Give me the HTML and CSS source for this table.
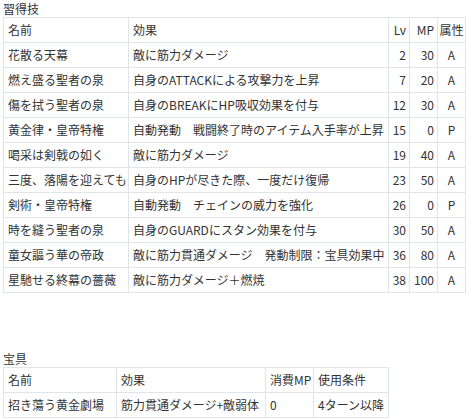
FILE: index.html
```html
<!DOCTYPE html>
<html lang="ja">
<head>
<meta charset="utf-8">
<link rel="stylesheet" href="styles.css">
</head>
<body>
<div class="page">
  <h3 class="caption">習得技</h3>
  <table class="grid skills">
    <colgroup>
      <col class="c-name"><col class="c-eff"><col class="c-lv"><col class="c-mp"><col class="c-attr">
    </colgroup>
    <tr><td>名前</td><td>効果</td><td class="num">Lv</td><td class="num">MP</td><td class="ctr">属性</td></tr>
    <tr><td>花散る天幕</td><td>敵に筋力ダメージ</td><td class="num">2</td><td class="num">30</td><td class="ctr">A</td></tr>
    <tr><td>燃え盛る聖者の泉</td><td>自身のATTACKによる攻撃力を上昇</td><td class="num">7</td><td class="num">20</td><td class="ctr">A</td></tr>
    <tr><td>傷を拭う聖者の泉</td><td>自身のBREAKにHP吸収効果を付与</td><td class="num">12</td><td class="num">30</td><td class="ctr">A</td></tr>
    <tr><td>黄金律・皇帝特権</td><td>自動発動　戦闘終了時のアイテム入手率が上昇</td><td class="num">15</td><td class="num">0</td><td class="ctr">P</td></tr>
    <tr><td>喝采は剣戟の如く</td><td>敵に筋力ダメージ</td><td class="num">19</td><td class="num">40</td><td class="ctr">A</td></tr>
    <tr><td>三度、落陽を迎えても</td><td>自身のHPが尽きた際、一度だけ復帰</td><td class="num">23</td><td class="num">50</td><td class="ctr">A</td></tr>
    <tr><td>剣術・皇帝特権</td><td>自動発動　チェインの威力を強化</td><td class="num">26</td><td class="num">0</td><td class="ctr">P</td></tr>
    <tr><td>時を縫う聖者の泉</td><td>自身のGUARDにスタン効果を付与</td><td class="num">30</td><td class="num">50</td><td class="ctr">A</td></tr>
    <tr><td>童女謳う華の帝政</td><td>敵に筋力貫通ダメージ　発動制限：宝具効果中</td><td class="num">36</td><td class="num">80</td><td class="ctr">A</td></tr>
    <tr><td>星馳せる終幕の薔薇</td><td>敵に筋力ダメージ＋燃焼</td><td class="num">38</td><td class="num">100</td><td class="ctr">A</td></tr>
  </table>

  <h3 class="caption caption-gap">宝具</h3>
  <table class="grid np">
    <colgroup>
      <col class="n-name"><col class="n-eff"><col class="n-mp"><col class="n-cond">
    </colgroup>
    <tr><td>名前</td><td>効果</td><td>消費MP</td><td>使用条件</td></tr>
    <tr><td>招き蕩う黄金劇場</td><td>筋力貫通ダメージ+敵弱体</td><td>0</td><td>4ターン以降</td></tr>
  </table>
</div>
</body>
</html>
```

FILE: styles.css
```css
html, body {
  margin: 0;
  padding: 0;
  background: #ffffff;
}
body {
  font-family: "Noto Sans CJK JP", "Noto Sans", sans-serif;
  font-size: 12px;
  color: #333333;
}
.page {
  padding: 0 3px;
}
.caption {
  margin: 0;
  font-size: 12px;
  font-weight: normal;
  line-height: 17px;
  height: 17px;
}
.caption-gap {
  margin-top: 57px;
}
.grid {
  border-collapse: collapse;
  table-layout: fixed;
}
.grid td {
  border: 1px solid #dfe6ea;
  height: 24px;
  padding: 0 3px 0 4px;
  line-height: 24px;
  white-space: nowrap;
  overflow: hidden;
}
.skills { width: 462px; }
.c-name { width: 125px; }
.c-eff { width: 260px; }
.c-lv { width: 21px; }
.c-mp { width: 28px; }
.c-attr { width: 28px; }
.np { width: 385px; }
.n-name { width: 113px; }
.n-eff { width: 149px; }
.n-mp { width: 48px; }
.n-cond { width: 75px; }
.grid td.num { text-align: right; padding: 0 3px 0 0; }
.grid td.ctr { text-align: center; padding: 0; }
```
